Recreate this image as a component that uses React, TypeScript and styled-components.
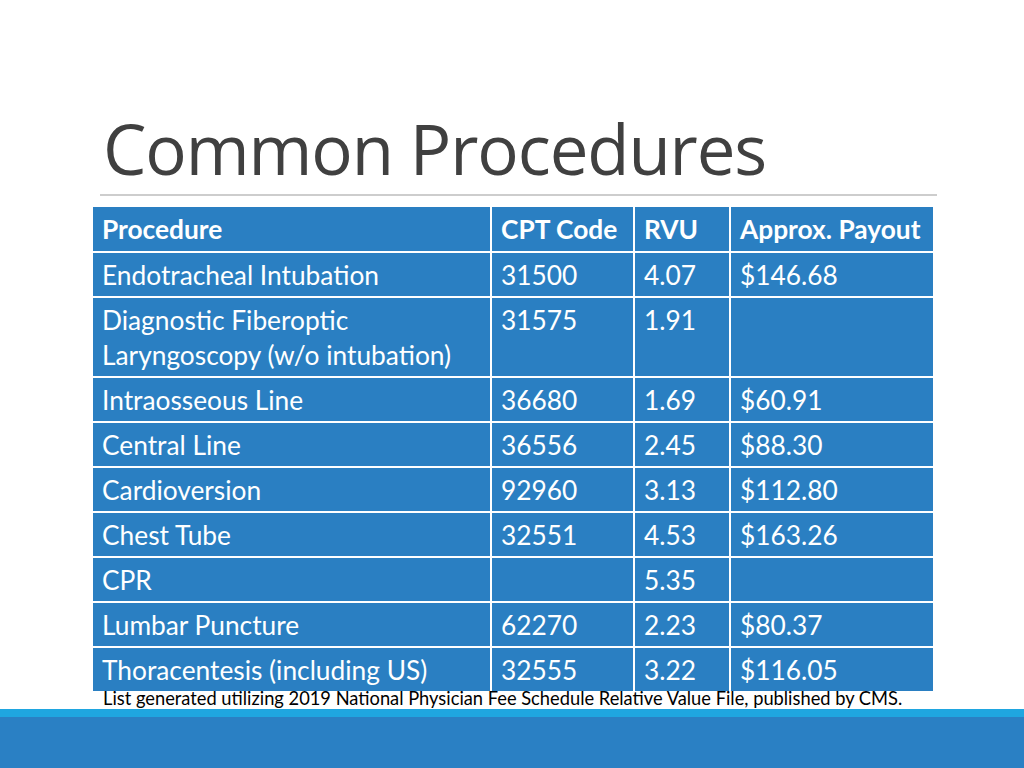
import React from "react";
import styled, { createGlobalStyle } from "styled-components";

const Global = createGlobalStyle`
  html, body { margin: 0; padding: 0; background: #ffffff; }
  #root { width: 1024px; height: 768px; }
`;

const Slide = styled.div`
  width: 1024px;
  height: 768px;
  display: flex;
  flex-direction: column;
  background: #ffffff;
  overflow: hidden;
`;

const Title = styled.h1`
  margin: 113px 0 0 103px;
  font-family: "Open Sans", "DejaVu Sans", sans-serif;
  font-weight: 400;
  font-size: 69px;
  letter-spacing: -1.1px;
  line-height: 71px;
  color: #404040;
  white-space: nowrap;
`;

const Rule = styled.div`
  margin: 10px 0 0 100px;
  width: 837px;
  height: 2px;
  background: #cdcdcd;
`;

const Table = styled.table`
  margin: 11px 0 0 93px;
  width: 840px;
  border-collapse: separate;
  border-spacing: 0;
  table-layout: fixed;
  font-family: Lato, "Liberation Sans", sans-serif;
  color: #ffffff;
`;

const Cell = styled.td<{ $head?: boolean; $last?: boolean; $lastRow?: boolean }>`
  background: #2a7fc2;
  padding: ${(p) => (p.$head ? "5px 9px 4px" : "5px 9px 3px")};
  font-size: 26.3px;
  font-weight: ${(p) => (p.$head ? 700 : 400)};
  line-height: 35px;
  vertical-align: top;
  text-align: left;
  border-right: ${(p) => (p.$last ? "none" : "2px solid #ffffff")};
  border-bottom: ${(p) => (p.$lastRow ? "none" : "2px solid #ffffff")};
  white-space: normal;
`;

const Footnote = styled.p`
  margin: -2px 0 0 103px;
  font-family: Lato, "Liberation Sans", sans-serif;
  font-size: 18.3px;
  line-height: 18px;
  color: #000000;
  white-space: nowrap;
  position: relative;
`;

const Footer = styled.div`
  margin-top: auto;
  display: flex;
  flex-direction: column;
`;

const Strip = styled.div`
  height: 8px;
  background: #1fa6e0;
`;

const Band = styled.div`
  height: 51px;
  background: #2a80c4;
`;

const widths = [399, 143, 96, 202];

const head = ["Procedure", "CPT Code", "RVU", "Approx. Payout"];
const rows: string[][] = [
  ["Endotracheal Intubation", "31500", "4.07", "$146.68"],
  ["Diagnostic Fiberoptic Laryngoscopy (w/o intubation)", "31575", "1.91", ""],
  ["Intraosseous Line", "36680", "1.69", "$60.91"],
  ["Central Line", "36556", "2.45", "$88.30"],
  ["Cardioversion", "92960", "3.13", "$112.80"],
  ["Chest Tube", "32551", "4.53", "$163.26"],
  ["CPR", "", "5.35", ""],
  ["Lumbar Puncture", "62270", "2.23", "$80.37"],
  ["Thoracentesis (including US)", "32555", "3.22", "$116.05"],
];

export default function App() {
  return (
    <>
      <Global />
      <Slide>
        <Title>Common Procedures</Title>
        <Rule />
        <Table>
          <colgroup>
            {widths.map((w, i) => (
              <col key={i} style={{ width: w }} />
            ))}
          </colgroup>
          <thead>
            <tr>
              {head.map((h, i) => (
                <Cell as="th" key={h} $head $last={i === 3}>
                  {h}
                </Cell>
              ))}
            </tr>
          </thead>
          <tbody>
            {rows.map((r, ri) => (
              <tr key={ri}>
                {r.map((c, ci) => (
                  <Cell key={ci} $last={ci === 3} $lastRow={ri === rows.length - 1}>
                    {c}
                  </Cell>
                ))}
              </tr>
            ))}
          </tbody>
        </Table>
        <Footnote>
          List generated utilizing 2019 National Physician Fee Schedule Relative Value File, published by CMS.
        </Footnote>
        <Footer>
          <Strip />
          <Band />
        </Footer>
      </Slide>
    </>
  );
}
